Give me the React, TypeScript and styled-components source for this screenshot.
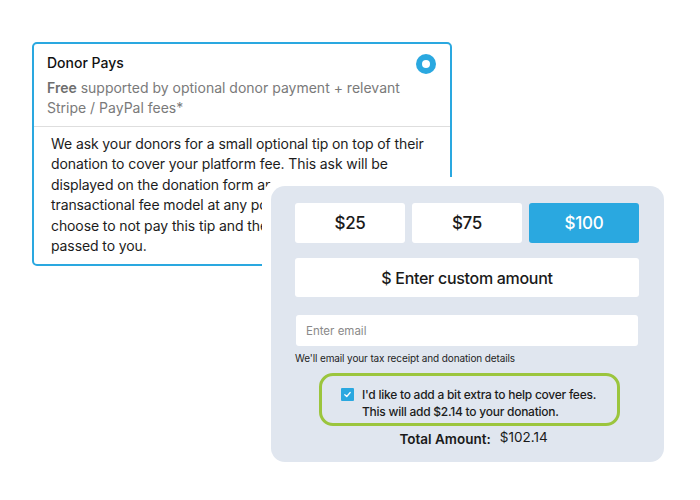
import * as React from 'react';
import styled, { createGlobalStyle } from 'styled-components';

const GlobalStyle = createGlobalStyle`
  html, body {
    margin: 0;
    padding: 0;
    background: #fff;
    font-family: Inter, "Noto Sans", "Liberation Sans", sans-serif;
    color: #1e1e1e;
  }
`;

const Stage = styled.div`
  position: relative;
  width: 700px;
  height: 500px;
  overflow: hidden;
  background: #fff;
`;

// plan option card (sits underneath)
const PlanCard = styled.div`
  position: absolute;
  left: 32px;
  top: 42px;
  width: 420px;
  height: 224px;
  box-sizing: border-box;
  border: 2px solid #2aa8e0;
  border-radius: 5px;
  background: #fff;
`;

const PlanHeader = styled.div`
  display: flex;
  justify-content: space-between;
  align-items: flex-start;
  padding: 9px 13px 8px 13px;
  border-bottom: 1px solid #dedede;
`;

const PlanTitle = styled.div`
  font-size: 14px;
  font-weight: 500;
  line-height: 20px;
  color: #111;
`;

const PlanSub = styled.div`
  margin-top: 5px;
  font-size: 14px;
  line-height: 20px;
  color: #7a7a7a;

  b {
    font-weight: 600;
    color: #6e6e6e;
  }
`;

const Radio = styled.span`
  flex: none;
  width: 20px;
  height: 20px;
  margin-top: 1px;
  margin-right: 1px;
  border-radius: 50%;
  background: #2aa8e0;
  display: flex;
  align-items: center;
  justify-content: center;

  &::after {
    content: '';
    width: 8px;
    height: 8px;
    border-radius: 50%;
    background: #fff;
  }
`;

const PlanBody = styled.p`
  margin: 0;
  padding: 7px 14px 0 17px;
  font-size: 14px;
  letter-spacing: -0.1px;
  line-height: 20.4px;
  white-space: nowrap;
  color: #1c1c1c;
`;

// donation form (lies on top, with a white ring around it)
const FormCard = styled.div`
  position: absolute;
  left: 271px;
  top: 186px;
  width: 393px;
  height: 276px;
  box-sizing: border-box;
  padding: 17px 25px 0 24px;
  border-radius: 14px;
  background: #e0e6ef;
  box-shadow: 0 0 0 9px #fff;
  display: flex;
  flex-direction: column;
`;

const AmountGrid = styled.div`
  display: grid;
  grid-template-columns: repeat(3, 1fr);
  gap: 7px;
`;

const AmountButton = styled.div<{ $active?: boolean }>`
  height: 40px;
  border-radius: 3px;
  display: flex;
  align-items: center;
  justify-content: center;
  font-size: 17px;
  font-weight: 500;
  letter-spacing: -0.3px;
  background: ${p => (p.$active ? '#2aa8e0' : '#fff')};
  color: ${p => (p.$active ? '#fff' : '#1a1a1a')};
`;

const CustomAmount = styled.div`
  margin-top: 15px;
  height: 39px;
  border-radius: 3px;
  background: #fff;
  display: flex;
  align-items: center;
  justify-content: center;
  font-size: 16px;
  font-weight: 500;
  letter-spacing: -0.3px;
  color: #1a1a1a;
`;

const EmailInput = styled.div`
  margin-top: 18px;
  margin-left: 1px;
  margin-right: 1px;
  height: 31px;
  border-radius: 3px;
  background: #fff;
  display: flex;
  align-items: center;
  padding-left: 10px;
  font-size: 11.5px;
  color: #8a8a8a;
`;

const Helper = styled.div`
  margin-top: 5px;
  font-size: 10px;
  letter-spacing: -0.12px;
  line-height: 14px;
  color: #1e1e1e;
`;

const FeeBox = styled.div`
  margin: 8px 19px 0 24px;
  height: 53px;
  box-sizing: border-box;
  border: 3px solid #9bc53d;
  border-radius: 14px;
  display: flex;
  align-items: flex-start;
  padding: 10px 0 0 19px;
  gap: 8px;
`;

const Check = styled.span`
  flex: none;
  width: 13px;
  height: 13px;
  margin-top: 2px;
  background: #2aa8e0;
  border-radius: 1px;
  display: flex;
  align-items: center;
  justify-content: center;
`;

const FeeText = styled.div`
  font-size: 12px;
  font-weight: 500;
  letter-spacing: -0.25px;
  line-height: 17px;
  color: #1c1c1c;
`;

const TotalRow = styled.div`
  margin-top: 5px;
  display: flex;
  justify-content: center;
  align-items: baseline;
  gap: 9px;
  padding-left: 13px;
`;

const TotalLabel = styled.span`
  font-size: 13.5px;
  font-weight: 600;
  color: #1a1a1a;
`;

const TotalValue = styled.span`
  font-size: 13.5px;
  color: #1a1a1a;
  position: relative;
  top: -2px;
`;

export default function App() {
  return (
    <>
      <GlobalStyle />
      <Stage>
        <PlanCard>
          <PlanHeader>
            <div>
              <PlanTitle>Donor Pays</PlanTitle>
              <PlanSub>
                <b>Free</b> supported by optional donor payment + relevant
                <br />
                Stripe / PayPal fees*
              </PlanSub>
            </div>
            <Radio />
          </PlanHeader>
          <PlanBody>
            We ask your donors for a small optional tip on top of their
            <br />
            donation to cover your platform fee. This ask will be
            <br />
            displayed on the donation form and you can switch to a
            <br />
            transactional fee model at any point. Your donors may
            <br />
            choose to not pay this tip and the fees will not be
            <br />
            passed to you.
          </PlanBody>
        </PlanCard>

        <FormCard>
          <AmountGrid>
            <AmountButton>$25</AmountButton>
            <AmountButton>$75</AmountButton>
            <AmountButton $active>$100</AmountButton>
          </AmountGrid>
          <CustomAmount>$ Enter custom amount</CustomAmount>
          <EmailInput>Enter email</EmailInput>
          <Helper>We'll email your tax receipt and donation details</Helper>
          <FeeBox>
            <Check>
              <svg width="9" height="9" viewBox="0 0 10 10">
                <path d="M2 5.2 L4.2 7.2 L8 2.8" fill="none" stroke="#fff" strokeWidth="1.4" strokeLinecap="round" strokeLinejoin="round" />
              </svg>
            </Check>
            <FeeText>
              I'd like to add a bit extra to help cover fees.
              <br />
              This will add $2.14 to your donation.
            </FeeText>
          </FeeBox>
          <TotalRow>
            <TotalLabel>Total Amount:</TotalLabel>
            <TotalValue>$102.14</TotalValue>
          </TotalRow>
        </FormCard>
      </Stage>
    </>
  );
}
